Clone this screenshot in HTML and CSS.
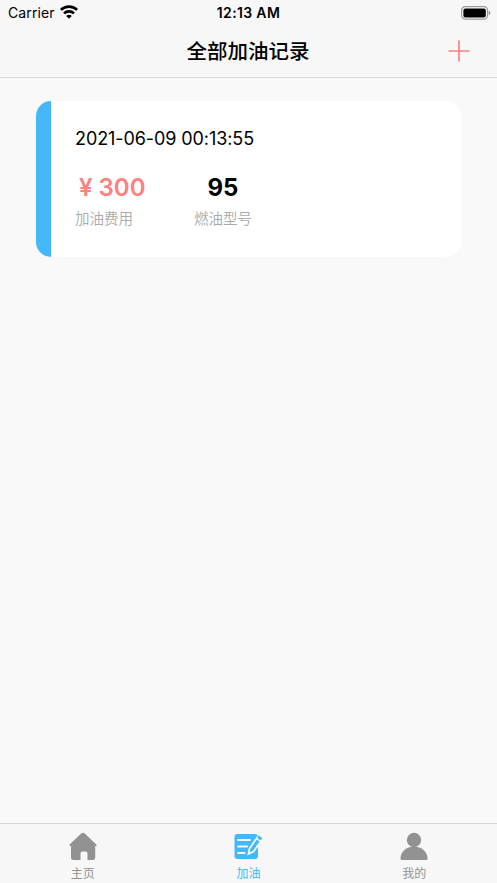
FILE: index.html
```html
<!DOCTYPE html>
<html lang="zh-CN">
<head>
<meta charset="utf-8">
<title>全部加油记录</title>
<link rel="stylesheet" href="styles.css">
</head>
<body>
<div class="app">
  <header class="top">
    <div class="status">
      <div class="carrier"><span>Carrier</span>
        <svg class="wifi" width="18" height="14" viewBox="0 0 18 14"><g fill="none" stroke="#000" stroke-width="2.7"><path d="M.9 4.9C5.4.5 12.6.5 17.1 4.9"/><path d="M4 8.4c2.8-2.700 7.200-2.700 10 0"/></g><path d="M6.200 10.900c1.600-1.500 4-1.500 5.600 0L9 13.700z"/></svg>
      </div>
      <div class="time">12:13 AM</div>
      <svg class="battery" width="30" height="14" viewBox="0 0 30 14"><rect x=".7" y=".7" width="25.8" height="12.4" rx="3.6" fill="#fff" stroke="#999" stroke-width="1.2"/><rect x="2.4" y="2.4" width="22.4" height="9" rx="2" /><path d="M27.8 4.6c2 .8 2 3.8 0 4.6z" fill="#8a8a8a"/></svg>
    </div>
    <div class="nav">
      <h1>全部加油记录</h1>
      <svg class="add" width="22" height="22" viewBox="0 0 22 22"><path d="M11 .5v21M.5 11h21" stroke="#ff8080" stroke-width="1.7"/></svg>
    </div>
  </header>
  <main>
    <article class="card">
      <div class="date">2021-06-09 00:13:55</div>
      <div class="stats">
        <div class="stat"><div class="value cost"><span class="yen">¥</span>300</div><div class="label">加油费用</div></div>
        <div class="stat"><div class="value">95</div><div class="label">燃油型号</div></div>
      </div>
    </article>
  </main>
  <nav class="tabs">
    <a class="tab">
      <svg width="30" height="30" viewBox="0 0 30 30"><path fill="#929292" d="M13.200 2.500q1.800-1.400 3.600 0L28.400 13.600q.8 1.400-.5 1.400H27.200v11.500q0 2.500-2.500 2.500h-5.200v-6.500q0-2-2-2h-3q-2 0-2 2V29H5.500q-2.500 0-2.500-2.500V15H2.100q-1.300 0-.5-1.400z"/></svg>
      <span>主页</span>
    </a>
    <a class="tab active">
      <svg width="30" height="30" viewBox="0 0 30 30"><rect x="1.500" y="3" width="23.500" height="25" rx="3" fill="#44b8f8"/><g stroke="#f7f7f7" stroke-width="2" stroke-linecap="round"><path d="M5 9h12M5 15.500h9M5 22h6.500"/></g><path d="M15.500 23l1-5.500L25 5.200l4.200 3L20.500 20.500z" fill="#44b8f8" stroke="#f7f7f7" stroke-width="1.800"/><path d="M23.300 7.500l4.300 3" stroke="#f7f7f7" stroke-width="1.500"/><path d="M25.300 4.200l4 2.800-1.100 1.700-4-2.800z" fill="#44b8f8"/></svg>
      <span>加油</span>
    </a>
    <a class="tab">
      <svg width="30" height="30" viewBox="0 0 30 30"><g fill="#929292"><circle cx="15" cy="9" r="7.200"/><path d="M1.500 27.500C1.500 20.500 7.500 15.500 15 15.500s13.500 5 13.500 12q0 1.500-1.500 1.500H3q-1.500 0-1.500-1.500z"/></g></svg>
      <span>我的</span>
    </a>
  </nav>
</div>
</body>
</html>
```
FILE: styles.css
```css
* { box-sizing: border-box; }
body { margin: 0; font-family: Inter, "Noto Sans CJK SC", sans-serif; color: #000; }
.app { height: 883px; display: flex; flex-direction: column; background: #f9f9f9; overflow: hidden; }
.top { height: 78px; background: #f7f7f7; border-bottom: 1px solid #d8d8d8; }
.status { height: 26px; padding: 0 6px 0 8px; display: grid; grid-template-columns: 1fr auto 1fr; align-items: center; font-size: 14px; line-height: 26px; }
.carrier { display: flex; align-items: center; gap: 5px; letter-spacing: .1px; }
.wifi { margin-top: -2px; }
.time { font-weight: 600; font-size: 14px; letter-spacing: .35px; margin-right: 2px; }
.battery { justify-self: end; margin-top: -1px; }
.nav { height: 50px; padding: 0 27px; display: grid; grid-template-columns: 1fr auto 1fr; align-items: center; }
h1 { grid-column: 2; margin: 2px 1px 0 0; font-size: 20.5px; line-height: 30px; font-weight: 500; }
.add { justify-self: end; }
main { flex: 1; padding: 23px 36px; }
.card { height: 156px; border-radius: 15px; border-left: 15px solid #44b8f8; padding: 24px; background: #fff; overflow: hidden; }
.date { font-size: 18px; line-height: 28px; letter-spacing: -.09px; }
.stats { display: flex; gap: 61px; margin-top: 20px; }
.stat { width: 58px; text-align: center; }
.value { font-size: 24px; line-height: 30px; font-weight: 700; white-space: nowrap; }
.cost { color: #ff8080; font-weight: 600; display: flex; gap: 6px; padding-left: 4px; }
.label { color: #aaa; font-size: 14.5px; line-height: 22px; margin-top: 5px; white-space: nowrap; font-weight: 350; }
.tabs { height: 60px; display: grid; grid-template-columns: repeat(3, 1fr); background: #f7f7f7; border-top: 1px solid #d8d8d8; }
.tab { display: flex; flex-direction: column; align-items: center; padding-top: 7px; color: #929292; font-size: 12px; line-height: 16px; }
.tab span { margin-top: 5px; }
.tab.active { color: #44b8f8; }
```
